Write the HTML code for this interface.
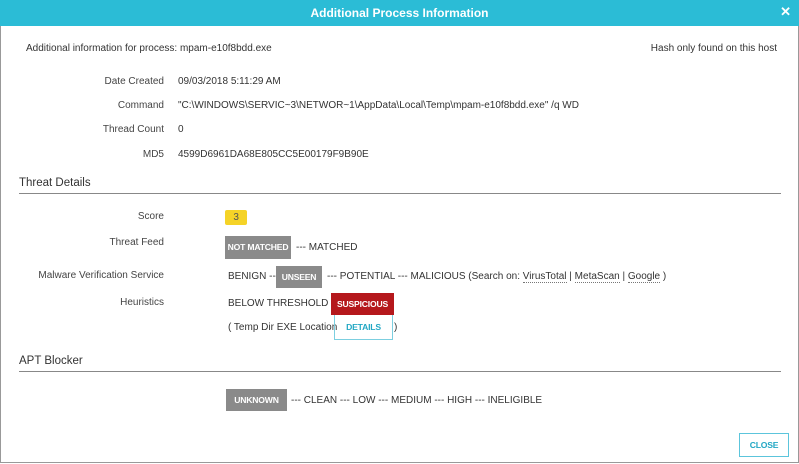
<!DOCTYPE html>
<html><head><style>
body{margin:0;width:799px;height:464px;position:relative;background:#fff;font-family:"Liberation Sans",sans-serif;font-size:10px;color:#333;overflow:hidden}
.a{position:absolute;white-space:nowrap;line-height:12px}
.hdr{position:absolute;left:0;top:0;width:799px;height:26px;background:#2bbcd6;color:#fff;font-weight:bold;font-size:12px;text-align:center;line-height:26px}
.frame{position:absolute;left:0;top:26px;width:797px;height:436px;border:1px solid #999;border-top:none}
.lbl{position:absolute;right:635px;white-space:nowrap;line-height:12px;color:#444}
.b{position:absolute;color:#fff;font-weight:bold;font-size:8.6px;text-align:center;box-sizing:border-box;white-space:nowrap;letter-spacing:-0.2px}
.sec{position:absolute;left:19px;width:762px;border-bottom:1px solid #888;font-size:11.5px;color:#333;height:16px}
.u{border-bottom:1px dotted #777}
</style></head><body>
<div class="hdr">Additional Process Information</div>
<div class="a" style="right:8px;top:6px;color:#fff;font-weight:bold;font-size:13px">✕</div>
<div class="frame"></div>
<div class="a" style="left:26px;top:43px">Additional information for process: mpam-e10f8bdd.exe</div>
<div class="a" style="right:22px;top:43px">Hash only found on this host</div>
<div class="lbl" style="top:76px">Date Created</div><div class="a" style="left:178px;top:76px">09/03/2018 5:11:29 AM</div>
<div class="lbl" style="top:100px">Command</div><div class="a" style="left:178px;top:100px">"C:\WINDOWS\SERVIC~3\NETWOR~1\AppData\Local\Temp\mpam-e10f8bdd.exe" /q WD</div>
<div class="lbl" style="top:124px">Thread Count</div><div class="a" style="left:178px;top:124px">0</div>
<div class="lbl" style="top:149px">MD5</div><div class="a" style="left:178px;top:149px">4599D6961DA68E805CC5E00179F9B90E</div>
<div class="sec" style="top:177px">Threat Details</div>
<div class="lbl" style="top:211px">Score</div>
<div class="b" style="left:225px;top:210px;width:22px;height:15px;background:#f5d327;color:#555;font-weight:normal;font-size:10px;line-height:15px;border-radius:2px">3</div>
<div class="lbl" style="top:237px">Threat Feed</div>
<div class="b" style="left:225px;top:236px;width:66px;height:23px;background:#8a8a8a;line-height:23px">NOT MATCHED</div>
<div class="a" style="left:296px;top:242px">--- MATCHED</div>
<div class="lbl" style="top:270px">Malware Verification Service</div>
<div class="a" style="left:228px;top:271px">BENIGN ---</div>
<div class="b" style="left:276px;top:266px;width:46px;height:22px;background:#8a8a8a;line-height:22px">UNSEEN</div>
<div class="a" style="left:327px;top:271px">--- POTENTIAL --- MALICIOUS (Search on: <span class="u">VirusTotal</span> | <span class="u">MetaScan</span> | <span class="u">Google</span> )</div>
<div class="lbl" style="top:297px">Heuristics</div>
<div class="a" style="left:228px;top:298px">BELOW THRESHOLD ---</div>
<div class="b" style="left:331px;top:293px;width:63px;height:22px;background:#b5181c;line-height:22px">SUSPICIOUS</div>
<div class="a" style="left:228px;top:322px">( Temp Dir EXE Location</div>
<div class="b" style="left:334px;top:315px;width:59px;height:25px;border:1px solid #7ccfe0;border-top:none;color:#22a7c4;line-height:25px">DETAILS</div>
<div class="a" style="left:394px;top:322px">)</div>
<div class="sec" style="top:355px">APT Blocker</div>
<div class="b" style="left:226px;top:389px;width:61px;height:22px;background:#8a8a8a;line-height:22px">UNKNOWN</div>
<div class="a" style="left:291px;top:395px">--- CLEAN --- LOW --- MEDIUM --- HIGH --- INELIGIBLE</div>
<div class="b" style="left:739px;top:433px;width:50px;height:24px;border:1px solid #5cc5dc;color:#22a7c4;line-height:22px">CLOSE</div>
</body></html>
